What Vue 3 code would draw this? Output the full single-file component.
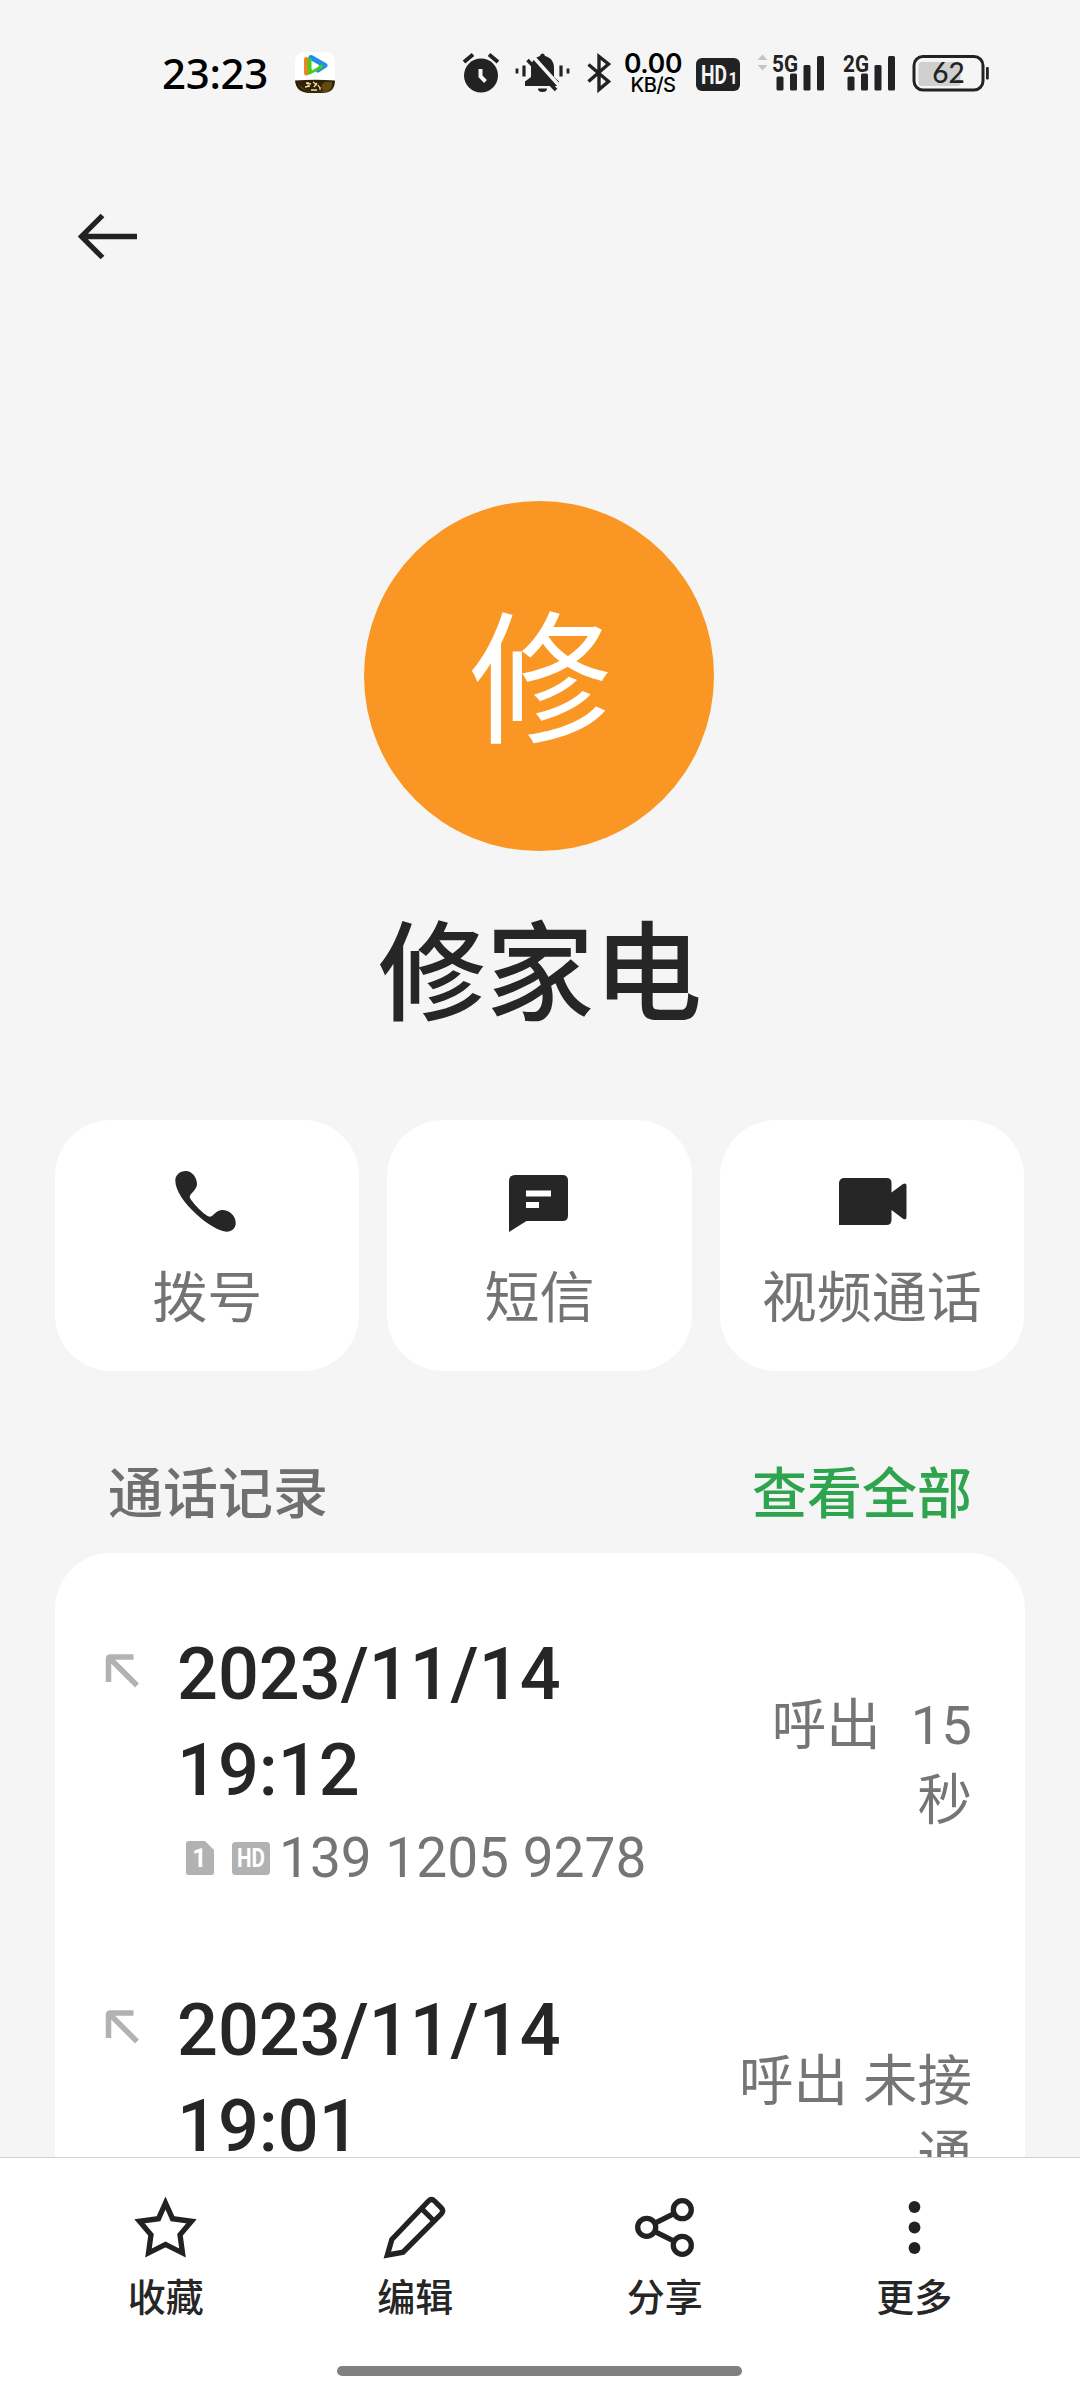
<script setup>
const signals = [
  { label: '5G', arrows: true },
  { label: '2G', arrows: false },
]

const actions = [
  { id: 'call', label: '拨号' },
  { id: 'sms', label: '短信' },
  { id: 'video', label: '视频通话' },
]

const calls = [
  { date: '2023/11/14', time: '19:12', number: '139 1205 9278', result: '呼出  15\n秒' },
  { date: '2023/11/14', time: '19:01', number: '', result: '呼出 未接\n通' },
]

const tools = [
  { id: 'star', label: '收藏' },
  { id: 'edit', label: '编辑' },
  { id: 'share', label: '分享' },
  { id: 'more', label: '更多' },
]
</script>

<template>
  <div class="screen">
    <div class="status">
      <span class="clock">23:23</span>
      <svg class="app-badge" width="42" height="42" viewBox="0 0 42 42">
        <rect x="1" y="0" width="40" height="40" rx="9" fill="#fff" />
        <path d="M1 28.500Q21 27 41 28.500Q41 41 28 41H14Q2 40 1 28.500Z" fill="#2e2208" />
        <path d="M4 32Q8 39 18 40L30 39Q24 34 31 30L38 30Q39 38 32 40H14Z" fill="#8a6516" opacity=".6" />
        <path d="M12 31l5 1M14 30v5M11 35l5-1M19 30l4 3M20 35l3-4M17 38h6M24 33l2 3M26 38v-3" stroke="#f5dfa0" stroke-width="1.300" fill="none" />
        <path d="M12.500 7.500v13.500" stroke="#f58220" stroke-width="5" stroke-linecap="round" />
        <path d="M17 5.500L31 13.500L24 18" fill="none" stroke="#1e8fe6" stroke-width="5" stroke-linejoin="round" stroke-linecap="round" />
        <path d="M15.500 8v12.500L27 14.500" fill="none" stroke="#49cc1c" stroke-width="4" stroke-linejoin="round" stroke-linecap="round" />
        <path d="M18 10l7 4.200-7 4.300z" fill="#fff" />
      </svg>

      <svg class="alarm" width="38" height="42" viewBox="0 0 38 42">
        <circle cx="19" cy="23.500" r="17" fill="#222" />
        <path d="M2 10L11 2.500M36 10L27 2.500" stroke="#222" stroke-width="4" />
        <path d="M18.500 17v7.500l5 5" fill="none" stroke="#f5f5f5" stroke-width="4" />
      </svg>
      <svg class="mute" width="56" height="42" viewBox="0 0 56 42">
        <path d="M28.500 1.500a3 3 0 0 1 2.500 2.500C37 5.500 40 10 40 16v9l5 4.500V34H11v-4.500l6-4.500v-9C17 10 20.500 5.500 26 4a3 3 0 0 1 2.500-2.500Z" fill="#222" />
        <path d="M24 36.500h9a4.500 3.500 0 0 1-9 0Z" fill="#222" />
        <path d="M18.500 4L46 34.500" stroke="#f5f5f5" stroke-width="3.500" />
        <path d="M13.500 8L42 38" stroke="#222" stroke-width="3.500" />
        <path d="M10 13.500v11M47 13.500v11" stroke="#222" stroke-width="3.200" />
        <path d="M3 16.500v5M54 16.500v5" stroke="#222" stroke-width="2.800" />
      </svg>
      <svg class="bt" width="26" height="42" viewBox="0 0 26 42">
        <path d="M2.500 12.500L22.500 29.500L13 37.500V4.500L22.500 12L2.500 29.500" fill="none" stroke="#222" stroke-width="3.400" />
      </svg>
      <div class="speed">
        <span class="rate">0.00</span>
        <span class="unit">KB/S</span>
      </div>
      <svg class="hd-badge" width="44" height="34" viewBox="0 0 44 34">
        <rect width="44" height="33" rx="6" fill="#222" />
        <text x="5" y="25.500" textLength="26" lengthAdjust="spacingAndGlyphs" class="hd-text">HD</text>
        <text x="32.500" y="25.500" class="hd-sub">1</text>
      </svg>

      <svg v-for="s in signals" :key="s.label" class="signal" width="71" height="42" viewBox="0 0 71 42">
        <path v-if="s.arrows" d="M0.500 8L5.500 2.500L10.500 8ZM0.500 13L5.500 18.500L10.500 13Z" fill="#c4c4c4" />
        <text x="15" y="19.500" textLength="26" lengthAdjust="spacingAndGlyphs" class="net">{{ s.label }}</text>
        <rect x="19.500" y="24.500" width="7" height="14" rx="1.500" fill="#222" />
        <rect x="33" y="21.500" width="7" height="17" rx="1.500" fill="#222" />
        <rect x="46.500" y="13" width="7" height="25.500" rx="1.500" fill="#222" />
        <rect x="60" y="4" width="7" height="34.500" rx="1.500" fill="#222" />
      </svg>

      <svg class="battery" width="78" height="42" viewBox="0 0 78 42">
        <rect x="6.500" y="10" width="42" height="24" rx="3" fill="#cfcfcf" />
        <rect x="2" y="4.500" width="69" height="33.500" rx="9" fill="none" stroke="#222" stroke-width="3" />
        <rect x="74" y="15" width="2.800" height="12.500" rx="1" fill="#222" />
        <text x="36.500" y="30.500" text-anchor="middle" class="level">62</text>
      </svg>
    </div>

    <main class="content">
      <header class="topbar">
        <svg width="68" height="60" viewBox="0 0 68 60">
          <path d="M61 30.500H6M26.500 9.500L5.500 30.500L26.500 51.500" fill="none" stroke="#222" stroke-width="5.300" />
        </svg>
      </header>

      <section class="profile">
        <div class="avatar">修</div>
        <h1 class="name">修家电</h1>
      </section>

      <nav class="actions">
        <button v-for="a in actions" :key="a.id" class="action">
          <svg width="72" height="72" viewBox="0 0 72 72" fill="#262626">
            <path
              v-if="a.id === 'call'"
              d="M4.300 15.500C4.300 10 9 6 14.700 6C21 6 26 12.500 26 19C26 25 18.700 28.500 18.700 32C19.500 36 33.500 50.500 38.500 51.700C42.500 51.700 45 45 51.500 45C58 45 64.700 50.500 64.700 57.700C64.700 63 61 66.700 55.700 66.700C42 66.700 4.300 36 4.300 15.500Z"
            />
            <path
              v-else-if="a.id === 'sms'"
              fill-rule="evenodd"
              d="M12 10H59.500Q65 10 65 15.500V50.500Q65 56 59.500 56H23.500L6 67V16Q6 10 12 10ZM23 25.500V31.500H48V25.500ZM23 37V43H36V37Z"
            />
            <path
              v-else
              d="M8.500 13H50.500Q55.500 13 55.500 18V27.500L67 19Q70.500 17.500 70.500 20.500V52Q70.500 55.500 67 53.700L55.500 45V55Q55.500 60 50.500 60H3V18.500Q3 13 8.500 13Z"
            />
          </svg>
          <span>{{ a.label }}</span>
        </button>
      </nav>

      <div class="section-head">
        <span>通话记录</span>
        <a>查看全部</a>
      </div>

      <section class="log">
        <article v-for="c in calls" :key="c.time" class="entry">
          <svg class="dir" width="36" height="36" viewBox="0 0 36 36">
            <path d="M3.500 29V6Q3.500 4 5.500 4H28.500M5 5.500L32 32.500" fill="none" stroke="#b2b2b2" stroke-width="5.500" />
          </svg>
          <div class="info">
            <div class="date">{{ c.date }}</div>
            <div class="date">{{ c.time }}</div>
            <div v-if="c.number" class="number">
              <svg class="sim" width="28" height="34" viewBox="0 0 28 34">
                <path d="M2.500 0H19L28 9V31.500Q28 34 25.500 34H2.500Q0 34 0 31.500V2.500Q0 0 2.500 0Z" fill="#b2b2b2" />
                <text x="13.500" y="26" text-anchor="middle" class="tag">1</text>
              </svg>
              <svg class="hd" width="38" height="33" viewBox="0 0 38 33">
                <rect width="38" height="33" rx="3.500" fill="#b2b2b2" />
                <text x="5" y="25" textLength="28" lengthAdjust="spacingAndGlyphs" class="tag">HD</text>
              </svg>
              <span>{{ c.number }}</span>
            </div>
          </div>
          <div class="result">{{ c.result }}</div>
        </article>
      </section>
    </main>

    <footer class="toolbar">
      <div class="tools">
        <div v-for="t in tools" :key="t.id" class="tool">
          <svg width="72" height="72" viewBox="0 0 72 72" fill="none" stroke="#222" stroke-width="5.300">
            <path
              v-if="t.id === 'star'"
              stroke-miterlimit="10"
              d="M35.500 12L42.500 27.700L61.500 30.300L50 43.700L52.500 62L35.500 53.500L18.500 62L21 43.700L9.500 30.300L28.500 27.700Z"
            />
            <template v-else-if="t.id === 'edit'">
              <path stroke-linejoin="miter" d="M8.300 64.200L12.800 48.500L49.500 10Q52.500 7 55.500 10L62.300 16.800Q65.300 19.800 62.300 22.800L24 61.200Z" />
              <path d="M42.500 17.500L55 30" />
            </template>
            <template v-else-if="t.id === 'share'">
              <circle cx="17.700" cy="36.300" r="9" />
              <circle cx="53.300" cy="18.700" r="9" />
              <circle cx="53.300" cy="54.300" r="9" />
              <path d="M25.500 32.300L45.500 22.300M25.500 40.300L45.500 50.300" />
            </template>
            <g v-else fill="#222" stroke="none">
              <circle cx="36.500" cy="16" r="5.900" />
              <circle cx="36.500" cy="36.500" r="5.900" />
              <circle cx="36.500" cy="57" r="5.900" />
            </g>
          </svg>
          <span>{{ t.label }}</span>
        </div>
      </div>
      <div class="home-bar"></div>
    </footer>
  </div>
</template>

<style>
body {
  margin: 0;
  background: #f5f5f5;
}
</style>

<style scoped>
.screen {
  width: 1080px;
  height: 2400px;
  display: flex;
  flex-direction: column;
  overflow: hidden;
  background: #f5f5f5;
  color: #262626;
  font-family: "Noto Sans CJK SC", sans-serif;
}

.status {
  box-sizing: border-box;
  height: 106px;
  padding: 40px 0 0 162px;
  display: flex;
  align-items: center;
  flex: none;
}
.status svg,
.speed {
  flex: none;
}
.clock {
  width: 108px;
  font: 500 42px/66px "Noto Sans", sans-serif;
  letter-spacing: -0.3px;
  color: #000;
  white-space: nowrap;
}
.app-badge {
  margin-left: 24px;
}
.alarm {
  margin-left: 126px;
}
.mute {
  margin-left: 14px;
}
.bt {
  margin-left: 16px;
}
.speed {
  width: 62px;
  margin-left: 10px;
  padding-top: 1px;
  display: flex;
  flex-direction: column;
  align-items: center;
  color: #000;
  font-family: Inter, sans-serif;
}
.rate {
  font-size: 26.500px;
  font-weight: 600;
  line-height: 23px;
  letter-spacing: -0.3px;
}
.unit {
  font-size: 20px;
  font-weight: 500;
  line-height: 21px;
  letter-spacing: -0.6px;
}
.hd-badge {
  margin: 3px 0 0 12px;
}
.hd-text {
  font: 700 26px Roboto, sans-serif;
  fill: #f5f5f5;
}
.hd-sub {
  font: 700 16px Roboto, sans-serif;
  fill: #f5f5f5;
}
.signal {
  margin-left: 17px;
}
.signal + .signal {
  margin-left: 0;
}
.net {
  font: 700 24px Roboto, sans-serif;
  fill: #222;
}
.battery {
  margin-left: 13px;
}
.level {
  font: 500 28px Lato, sans-serif;
  fill: #222;
}

.content {
  flex: 1;
  min-height: 0;
  overflow: hidden;
}
.topbar {
  box-sizing: border-box;
  height: 395px;
  padding: 100px 0 0 76px;
}
.topbar svg {
  display: block;
}

.profile {
  display: flex;
  flex-direction: column;
  align-items: center;
}
.avatar {
  box-sizing: border-box;
  width: 350px;
  height: 350px;
  margin-right: 2px;
  padding-left: 3px;
  border-radius: 50%;
  background: #fa9623;
  color: #fff;
  text-align: center;
  font-size: 143px;
  line-height: 337px;
}
.name {
  margin: 39px 0 0;
  font-size: 108px;
  font-weight: 500;
  line-height: 150px;
}

.actions {
  display: grid;
  grid-template-columns: repeat(3, 1fr);
  gap: 28px;
  margin: 80px 56px 0 55px;
}
.action {
  height: 251px;
  padding: 45px 0 0;
  border: 0;
  border-radius: 56px;
  background: #fff;
  display: flex;
  flex-direction: column;
  align-items: center;
  gap: 20px;
  color: #737373;
  font: 400 55px/72px "Noto Sans CJK SC", sans-serif;
}

.section-head {
  display: flex;
  justify-content: space-between;
  margin: 82px 108px 28px;
  font-size: 55px;
  line-height: 72px;
  font-weight: 500;
  color: #6f6f6f;
}
.section-head a {
  color: #2ea44f;
}

.log {
  margin: 0 55px;
  padding: 74px 53px 100px 50px;
  border-radius: 56px 56px 0 0;
  background: #fff;
  display: flex;
  flex-direction: column;
  gap: 92px;
}
.entry {
  display: flex;
  align-items: flex-start;
}
.dir {
  margin-top: 26px;
}
.info {
  flex: 1;
  margin-left: 36px;
}
.date {
  font: 500 72px/96px Roboto, sans-serif;
}
.number {
  display: flex;
  align-items: center;
  margin-top: 6px;
  color: #757575;
  font: 400 55px/66px Roboto, sans-serif;
  white-space: nowrap;
}
.sim {
  margin-left: 9px;
}
.hd {
  margin: 0 9px 0 18px;
}
.tag {
  font: 700 25px Roboto, sans-serif;
  fill: #fff;
}
.result {
  margin-top: 61px;
  text-align: right;
  white-space: pre;
  color: #757575;
  font: 400 54.500px/75px Roboto, "Noto Sans CJK SC", sans-serif;
  word-spacing: 1.500px;
}

.toolbar {
  flex: none;
  box-sizing: border-box;
  height: 243px;
  border-top: 1px solid #d2d2d2;
  background: #fff;
}
.tools {
  display: flex;
  padding: 33px 41px 0;
}
.tool {
  flex: 1;
  display: flex;
  flex-direction: column;
  align-items: center;
  gap: 7px;
  font-size: 38px;
  line-height: 50px;
  font-weight: 500;
}
.home-bar {
  width: 405px;
  height: 10px;
  margin: 46px 0 0 337px;
  border-radius: 5px;
  background: #808080;
}
</style>
